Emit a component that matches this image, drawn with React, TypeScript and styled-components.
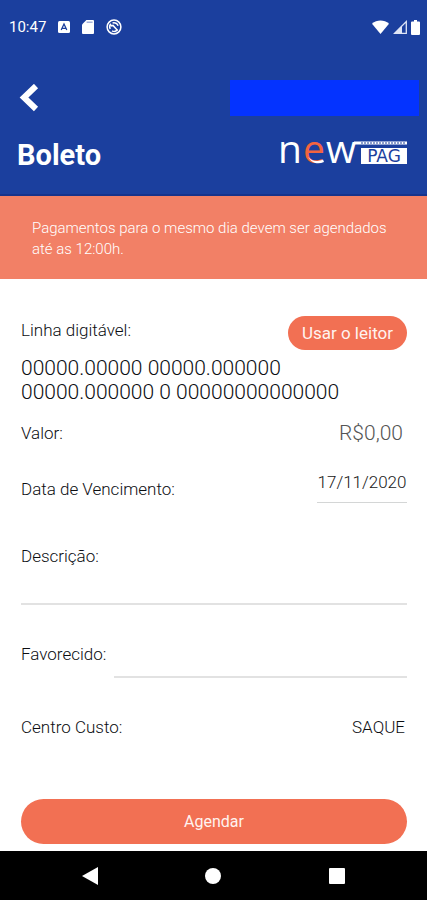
import React from 'react';
import styled, { createGlobalStyle } from 'styled-components';

const GlobalStyle = createGlobalStyle`
  * { box-sizing: border-box; }
  body { margin: 0; background: #fff; font-family: Roboto, "Liberation Sans", sans-serif; }
  button, input, select { font-family: inherit; font-weight: inherit; border: 0; margin: 0; padding: 0; outline: 0; }
`;

const Screen = styled.div`
  display: flex;
  flex-direction: column;
  min-height: 100vh;
  color: #0c0e12;
`;

const Header = styled.header`
  background: #1b3f9e;
  border-bottom: 2px solid #17338b;
  color: #fff;
`;

const StatusBar = styled.div`
  display: flex;
  align-items: center;
  justify-content: space-between;
  height: 54px;
  padding: 0 7px 0 9px;
  font-size: 15px;
`;

const StatusGroup = styled.div<{ $gap: number }>`
  display: flex;
  align-items: center;
  gap: ${({ $gap }) => $gap}px;
`;

const Clock = styled.span`
  line-height: 20px;
`;

const TopRow = styled.div`
  display: flex;
  align-items: center;
  justify-content: space-between;
  margin-top: 26px;
  padding: 0 8px 0 17px;
`;

const BackButton = styled.button`
  display: flex;
  align-items: center;
  width: 36px;
  height: 36px;
  background: none;
`;

const AccountBlock = styled.div`
  flex: 0 0 189px;
  height: 36px;
  background: #0433ff;
`;

const TitleRow = styled.div`
  display: flex;
  align-items: center;
  justify-content: space-between;
  height: 78px;
  padding: 0 18px 0 17px;
`;

const Title = styled.h1`
  margin: 0;
  font-size: 29px;
  line-height: 36px;
  font-weight: 700;
`;

const Notice = styled.p`
  margin: 0;
  padding: 22px 32px 19px;
  background: #f28066;
  color: #fff;
  font-size: 15px;
  font-weight: 300;
  line-height: 21px;
`;

const Form = styled.form`
  display: flex;
  flex-direction: column;
  flex: 1;
  padding: 37px 20px 7px 21px;
  font-size: 17px;
  font-weight: 300;
`;

const Row = styled.div<{ $align?: string; $top?: number; $height?: number }>`
  display: flex;
  align-items: ${({ $align }) => $align || 'center'};
  justify-content: space-between;
  gap: 8px;
  margin-top: ${({ $top }) => $top || 0}px;
  min-height: ${({ $height }) => $height || 28}px;
`;

const Label = styled.label`
  flex: none;
  line-height: 28px;
`;

const PillButton = styled.button<{ $large?: boolean }>`
  height: ${({ $large }) => ($large ? 45 : 34)}px;
  width: ${({ $large }) => ($large ? '100%' : 'auto')};
  padding: 0 14px;
  border-radius: 24px;
  background: #f27053;
  color: #fff3ef;
  font-size: ${({ $large }) => ($large ? 16 : 17)}px;
  font-weight: 400;
`;

const BarCode = styled.output`
  display: block;
  margin-top: 6px;
  font-size: 21px;
  line-height: 24px;
`;

const AmountInput = styled.input`
  width: 120px;
  height: 28px;
  padding-right: 4px;
  background: none;
  color: #555;
  font-size: 21px;
  text-align: right;
`;

const DateInput = styled.input`
  width: 90px;
  height: 35px;
  padding: 4px 0 10px;
  border-bottom: 1px solid #d4d6d6;
  background: none;
  color: #181818;
  font-size: 17px;
  text-align: center;
`;

const LineInput = styled.input`
  flex: 1;
  width: 100%;
  min-width: 0;
  min-height: 35px;
  border-bottom: 2px solid #e2e2e2;
  background: none;
  font-size: 17px;
`;

const CostSelect = styled.select`
  appearance: none;
  height: 28px;
  padding-right: 2px;
  background: none;
  color: inherit;
  font-size: 17px;
  text-align: right;
`;

const Stack = styled.div`
  display: flex;
  flex-direction: column;
  margin-top: 39px;
`;

const Submit = styled.div`
  margin-top: auto;
`;

const NavBar = styled.nav`
  display: grid;
  grid-template-columns: repeat(3, 1fr);
  justify-items: center;
  align-items: center;
  height: 49px;
  padding: 0 28px;
  background: #000;
`;

const NavButton = styled.button`
  display: flex;
  align-items: center;
  justify-content: center;
  width: 40px;
  height: 40px;
  background: none;
`;

const KeyboardIcon = () => (
  <svg width="12" height="12" viewBox="0 0 12 12" aria-hidden="true">
    <rect width="12" height="12" rx="1.5" fill="#fff" />
    <path d="M3.2 9 6 3l2.8 6M4.3 7.3h3.4" fill="none" stroke="#1b3f9e" strokeWidth="1.3" />
  </svg>
);

const CardIcon = () => (
  <svg width="12" height="14" viewBox="0 0 12 14" aria-hidden="true">
    <path d="M4.4 0H11a1 1 0 0 1 1 1v12a1 1 0 0 1-1 1H1a1 1 0 0 1-1-1V4.4Z" fill="#fff" />
    <path d="M4.6 2.2h6" stroke="#8fa0d2" strokeWidth="1.2" />
  </svg>
);

const SyncIcon = () => (
  <svg width="16" height="16" viewBox="0 0 16 16" fill="none" stroke="#fff" aria-hidden="true">
    <circle cx="8" cy="8" r="6.9" strokeWidth="1.5" />
    <path d="M4.2 10A4.3 4.3 0 0 1 5 4.900M6.600 4A4.3 4.3 0 0 1 12.100 6.800M11.400 10.800A4.3 4.3 0 0 1 6 11.900" strokeWidth="1.5" />
    <path d="m4.6 7 2.4-.6 4.600 5" strokeWidth="1.5" />
  </svg>
);

const WifiIcon = () => (
  <svg width="17" height="14" viewBox="0 0 17 14" aria-hidden="true">
    <path d="M0 3.8C4.8-.6 12.2-.6 17 3.8L8.5 14Z" fill="#fff" />
  </svg>
);

const SignalIcon = () => (
  <svg width="14" height="14" viewBox="0 0 14 14" aria-hidden="true">
    <path d="M1.6 13.3H13.300V1.600Z" fill="none" stroke="#dfe5f6" strokeWidth="1.3" />
    <path d="M1 13.600 9 5.600v8Z" fill="#dfe5f6" />
  </svg>
);

const BatteryIcon = () => (
  <svg width="9" height="15" viewBox="0 0 9 15" aria-hidden="true">
    <path d="M3 0h3v1.600h2a1 1 0 0 1 1 1V14a1 1 0 0 1-1 1H1a1 1 0 0 1-1-1V2.600a1 1 0 0 1 1-1h2Z" fill="#fff" />
  </svg>
);

const BackIcon = () => (
  <svg width="24" height="28" viewBox="0 0 24 28" aria-hidden="true">
    <path d="M19 2 7 13.5 19 25" fill="none" stroke="#fff" strokeWidth="6" />
  </svg>
);

const Logo = () => (
  <svg width="134" height="74" viewBox="-6 -19 134 74" role="img" aria-label="newPAG">
    <g fontFamily='"Open Sans", "Noto Sans", sans-serif' fontSize="39" fontWeight="500">
      <text x="-3" y="26" fill="#fff">n</text>
      <text x="22" y="26" fill="#f2643f">e</text>
      <text x="45" y="26" fill="#fff">w</text>
    </g>
    <path d="M27 20c4 4.500 9 5 15 2.500l1 2.500c-6 2.500-12 1.500-16-5Z" fill="#fff" />
    <path d="M73 6h53" stroke="#fff" strokeWidth="3" />
    <path d="M80 6h44" stroke="#1b3f9e" strokeWidth="1" strokeDasharray="2 1" />
    <rect x="80" y="11" width="46" height="16" fill="#fff" />
    <text x="103" y="25" textAnchor="middle" fill="#1b3f9e" fontFamily='"DejaVu Sans", sans-serif' fontSize="17">PAG</text>
  </svg>
);

export default function App() {
  return (
    <Screen>
      <GlobalStyle />
      <Header>
        <StatusBar>
          <StatusGroup $gap={12}>
            <Clock>10:47</Clock>
            <KeyboardIcon />
            <CardIcon />
            <SyncIcon />
          </StatusGroup>
          <StatusGroup $gap={4}>
            <WifiIcon />
            <SignalIcon />
            <BatteryIcon />
          </StatusGroup>
        </StatusBar>
        <TopRow>
          <BackButton type="button" aria-label="Voltar"><BackIcon /></BackButton>
          <AccountBlock />
        </TopRow>
        <TitleRow>
          <Title>Boleto</Title>
          <Logo />
        </TitleRow>
      </Header>
      <Notice>Pagamentos para o mesmo dia devem ser agendados até as 12:00h.</Notice>
      <Form onSubmit={(e) => e.preventDefault()}>
        <Row $height={34} $align="flex-start">
          <Label htmlFor="linha">Linha digitável:</Label>
          <PillButton type="button">Usar o leitor</PillButton>
        </Row>
        <BarCode id="linha">
          00000.00000 00000.000000<br />00000.000000 0 00000000000000
        </BarCode>
        <Row $height={58}>
          <Label htmlFor="valor">Valor:</Label>
          <AmountInput id="valor" defaultValue="R$0,00" />
        </Row>
        <Row $height={41} $align="flex-end">
          <Label htmlFor="data">Data de Vencimento:</Label>
          <DateInput id="data" defaultValue="17/11/2020" />
        </Row>
        <Stack>
          <Label htmlFor="descricao">Descrição:</Label>
          <LineInput id="descricao" />
        </Stack>
        <Row $top={35} $height={38} $align="stretch">
          <Label htmlFor="favorecido">Favorecido:</Label>
          <LineInput id="favorecido" />
        </Row>
        <Row $top={35}>
          <Label htmlFor="centro">Centro Custo:</Label>
          <CostSelect id="centro" defaultValue="SAQUE">
            <option>SAQUE</option>
          </CostSelect>
        </Row>
        <Submit>
          <PillButton $large type="submit">Agendar</PillButton>
        </Submit>
      </Form>
      <NavBar>
        <NavButton type="button" aria-label="Voltar">
          <svg width="16" height="18" viewBox="0 0 16 18"><path d="M16 0v18L0 9Z" fill="#fff" /></svg>
        </NavButton>
        <NavButton type="button" aria-label="Início">
          <svg width="16" height="16" viewBox="0 0 16 16"><circle cx="8" cy="8" r="8" fill="#fff" /></svg>
        </NavButton>
        <NavButton type="button" aria-label="Recentes">
          <svg width="16" height="16" viewBox="0 0 16 16"><rect width="16" height="16" rx="1" fill="#fff" /></svg>
        </NavButton>
      </NavBar>
    </Screen>
  );
}
